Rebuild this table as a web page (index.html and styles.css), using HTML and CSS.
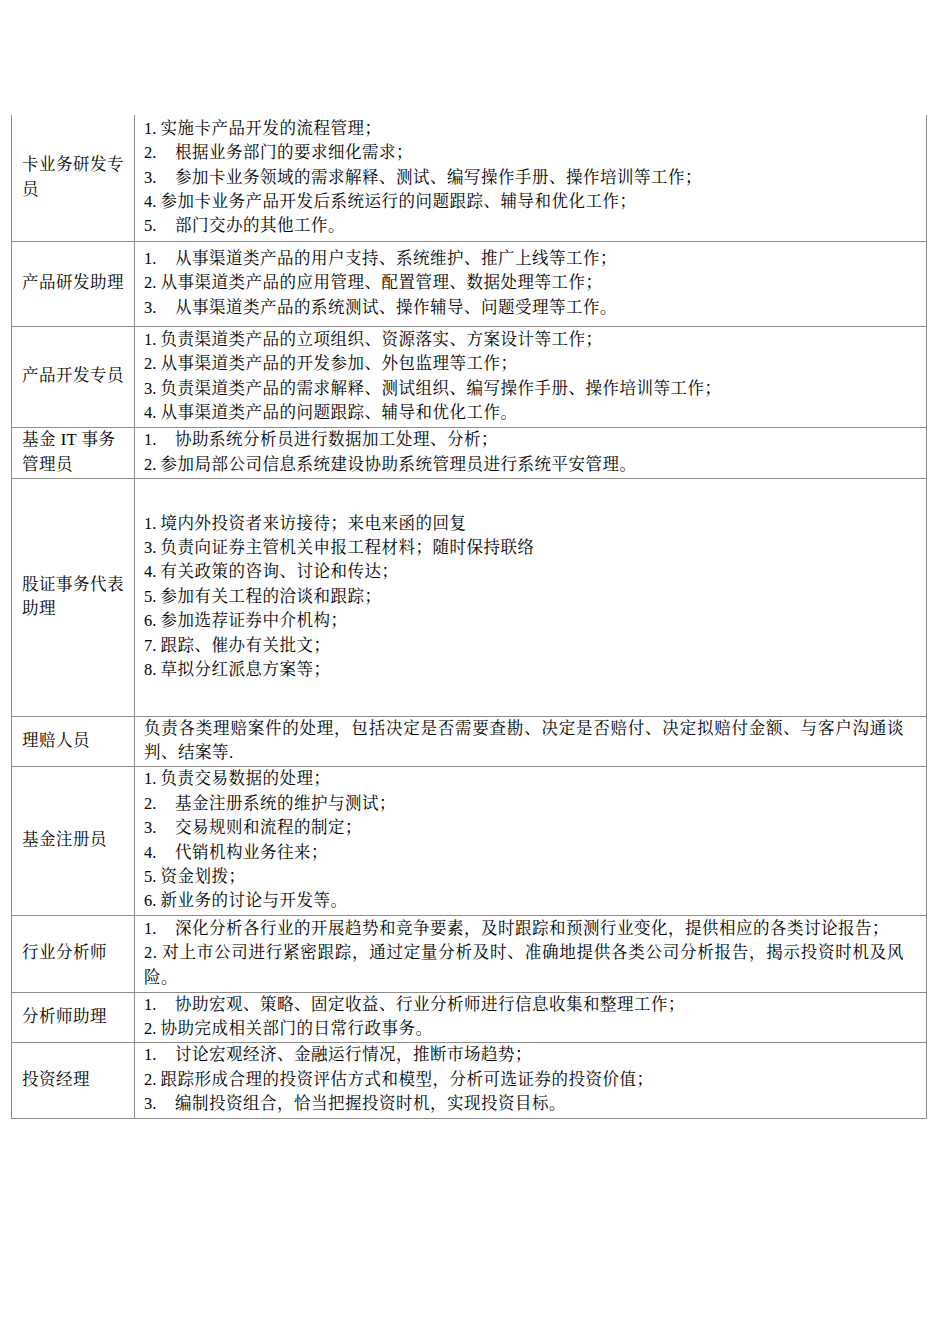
FILE: index.html
```html
<!DOCTYPE html>
<html lang="zh-CN">
<head>
<meta charset="utf-8">
<title>岗位职责</title>
<link rel="stylesheet" href="styles.css">
</head>
<body>
<table class="duties">
  <colgroup><col class="col-role"><col class="col-desc"></colgroup>
  <tbody>
    <tr class="row row-first h126">
      <td class="role">卡业务研发专员</td>
      <td class="desc">
        <p><span class="n">1.</span>实施卡产品开发的流程管理；</p>
        <p><span class="n wide">2.</span>根据业务部门的要求细化需求；</p>
        <p><span class="n wide">3.</span>参加卡业务领域的需求解释、测试、编写操作手册、操作培训等工作；</p>
        <p><span class="n">4.</span>参加卡业务产品开发后系统运行的问题跟踪、辅导和优化工作；</p>
        <p><span class="n wide">5.</span>部门交办的其他工作。</p>
      </td>
    </tr>
    <tr class="row h85">
      <td class="role">产品研发助理</td>
      <td class="desc">
        <p><span class="n wide">1.</span>从事渠道类产品的用户支持、系统维护、推广上线等工作；</p>
        <p><span class="n">2.</span>从事渠道类产品的应用管理、配置管理、数据处理等工作；</p>
        <p><span class="n wide">3.</span>从事渠道类产品的系统测试、操作辅导、问题受理等工作。</p>
      </td>
    </tr>
    <tr class="row h101">
      <td class="role">产品开发专员</td>
      <td class="desc">
        <p><span class="n">1.</span>负责渠道类产品的立项组织、资源落实、方案设计等工作；</p>
        <p><span class="n">2.</span>从事渠道类产品的开发参加、外包监理等工作；</p>
        <p><span class="n">3.</span>负责渠道类产品的需求解释、测试组织、编写操作手册、操作培训等工作；</p>
        <p><span class="n">4.</span>从事渠道类产品的问题跟踪、辅导和优化工作。</p>
      </td>
    </tr>
    <tr class="row h51">
      <td class="role">基金 IT 事务管理员</td>
      <td class="desc">
        <p><span class="n wide">1.</span>协助系统分析员进行数据加工处理、分析；</p>
        <p><span class="n">2.</span>参加局部公司信息系统建设协助系统管理员进行系统平安管理。</p>
      </td>
    </tr>
    <tr class="row h238">
      <td class="role">股证事务代表助理</td>
      <td class="desc">
        <p><span class="n">1.</span>境内外投资者来访接待；来电来函的回复</p>
        <p><span class="n">3.</span>负责向证券主管机关申报工程材料；随时保持联络</p>
        <p><span class="n">4.</span>有关政策的咨询、讨论和传达；</p>
        <p><span class="n">5.</span>参加有关工程的洽谈和跟踪；</p>
        <p><span class="n">6.</span>参加选荐证券中介机构；</p>
        <p><span class="n">7.</span>跟踪、催办有关批文；</p>
        <p><span class="n">8.</span>草拟分红派息方案等；</p>
      </td>
    </tr>
    <tr class="row h50">
      <td class="role">理赔人员</td>
      <td class="desc">
        <p class="justify">负责各类理赔案件的处理，包括决定是否需要查勘、决定是否赔付、决定拟赔付金额、与客户沟通谈判、结案等.</p>
      </td>
    </tr>
    <tr class="row h149">
      <td class="role">基金注册员</td>
      <td class="desc">
        <p><span class="n">1.</span>负责交易数据的处理；</p>
        <p><span class="n wide">2.</span>基金注册系统的维护与测试；</p>
        <p><span class="n wide">3.</span>交易规则和流程的制定；</p>
        <p><span class="n wide">4.</span>代销机构业务往来；</p>
        <p><span class="n">5.</span>资金划拨；</p>
        <p><span class="n">6.</span>新业务的讨论与开发等。</p>
      </td>
    </tr>
    <tr class="row h77">
      <td class="role">行业分析师</td>
      <td class="desc">
        <p><span class="n wide">1.</span>深化分析各行业的开展趋势和竞争要素，及时跟踪和预测行业变化，提供相应的各类讨论报告；</p>
        <p class="justify">2. 对上市公司进行紧密跟踪，通过定量分析及时、准确地提供各类公司分析报告，揭示投资时机及风险。</p>
      </td>
    </tr>
    <tr class="row h50">
      <td class="role">分析师助理</td>
      <td class="desc">
        <p><span class="n wide">1.</span>协助宏观、策略、固定收益、行业分析师进行信息收集和整理工作；</p>
        <p><span class="n">2.</span>协助完成相关部门的日常行政事务。</p>
      </td>
    </tr>
    <tr class="row h76">
      <td class="role">投资经理</td>
      <td class="desc">
        <p><span class="n wide">1.</span>讨论宏观经济、金融运行情况，推断市场趋势；</p>
        <p><span class="n">2.</span>跟踪形成合理的投资评估方式和模型，分析可选证券的投资价值；</p>
        <p><span class="n wide">3.</span>编制投资组合，恰当把握投资时机，实现投资目标。</p>
      </td>
    </tr>
  </tbody>
</table>
</body>
</html>
```

FILE: styles.css
```css
html, body {
  margin: 0;
  padding: 0;
  background: #ffffff;
}

body {
  font-family: "Liberation Serif", "Noto Serif CJK SC", "Noto Sans CJK SC", serif;
  font-size: 16.5px;
  letter-spacing: 0.5px;
  line-height: 24.4px;
  color: #000000;
}

.duties {
  margin: 115px 0 0 11px;
  width: 915px;
  border-collapse: collapse;
  table-layout: fixed;
}

.col-role { width: 123px; }
.col-desc { width: 792px; }

.duties td {
  border: 1px solid #8c8c8c;
  padding: 0;
  vertical-align: middle;
}

.row-first td { border-top: none; }

.role {
  padding: 0 7px 0 10px !important;
}

.desc {
  padding: 0 22px 0 9px !important;
}

.desc p {
  margin: 0;
}

.justify {
  text-align: justify;
}

.n {
  display: inline-block;
  width: 16.5px;
  letter-spacing: 0;
}

.n.wide {
  width: 31px;
}

.h126 { height: 126px; }
.h85 { height: 85px; }
.h101 { height: 101px; }
.h51 { height: 51px; }
.h238 { height: 238px; }
.h50 { height: 50px; }
.h149 { height: 149px; }
.h77 { height: 77px; }
.h76 { height: 76px; }
```
